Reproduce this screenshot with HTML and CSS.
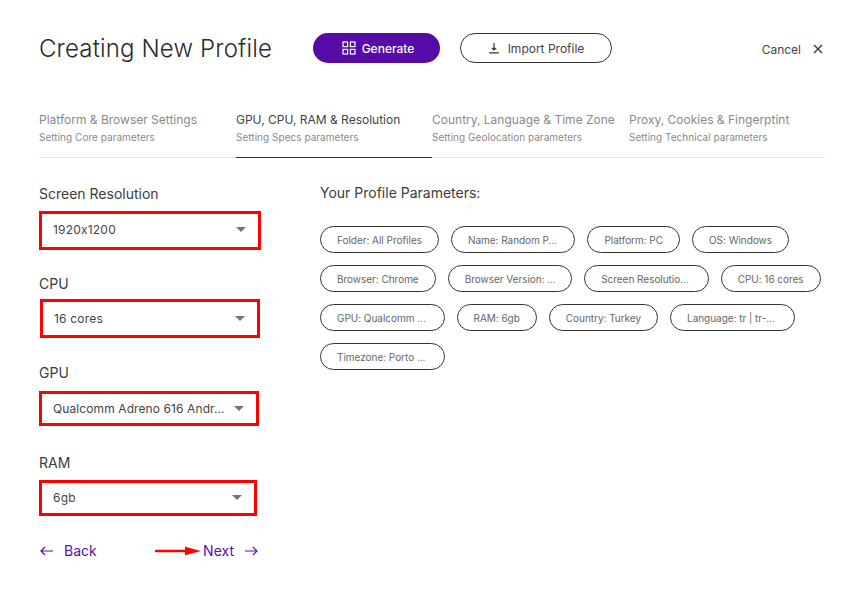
FILE: index.html
```html
<!DOCTYPE html>
<html lang="en">
<head>
  <meta charset="UTF-8" />
  <title>Creating New Profile</title>
  <link rel="stylesheet" href="styles.css">
</head>
<body>

<div class="container">
  <div class="header">
    <h1>Creating New Profile</h1>
    <button class="btn btn-generate" type="button">
      <svg width="14" height="14" viewBox="0 0 14 14" fill="none" stroke="#fff" stroke-width="1.2">
        <rect x="1" y="1" width="4.6" height="4.6"/><rect x="8.4" y="1" width="4.6" height="4.6"/>
        <rect x="1" y="8.4" width="4.6" height="4.6"/><rect x="8.4" y="8.4" width="4.6" height="4.6"/>
      </svg>
      Generate
    </button>
    <button class="btn btn-import" type="button">
      <svg width="12" height="12" viewBox="0 0 12 12" fill="none" stroke="#333" stroke-width="1.2">
        <path d="M6 1v7M3.8 5.8 6 8l2.2-2.2M1.2 10.9h9.6"/>
      </svg>
      Import Profile
    </button>
    <div class="cancel">
      Cancel
      <svg width="10" height="10" viewBox="0 0 10 10" fill="none" stroke="#333" stroke-width="1.3">
        <path d="M1 1l8 8M9 1l-8 8"/>
      </svg>
    </div>
  </div>

  <div class="tabs">
    <div class="tab tab-1"><div class="tab-title">Platform &amp; Browser Settings</div><div class="tab-sub">Setting Core parameters</div></div>
    <div class="tab tab-2 active"><div class="tab-title">GPU, CPU, RAM &amp; Resolution</div><div class="tab-sub">Setting Specs parameters</div></div>
    <div class="tab tab-3"><div class="tab-title">Country, Language &amp; Time Zone</div><div class="tab-sub">Setting Geolocation parameters</div></div>
    <div class="tab tab-4"><div class="tab-title">Proxy, Cookies &amp; Fingerptint</div><div class="tab-sub">Setting Technical parameters</div></div>
  </div>

  <div class="content">
    <div class="fields">
      <label class="field-label">Screen Resolution</label>
      <div class="select select-res"><span class="select-value">1920x1200</span><span class="caret"></span></div>

      <label class="field-label">CPU</label>
      <div class="select select-cpu"><span class="select-value">16 cores</span><span class="caret"></span></div>

      <label class="field-label">GPU</label>
      <div class="select select-gpu"><span class="select-value">Qualcomm Adreno 616 Andr...</span><span class="caret"></span></div>

      <label class="field-label">RAM</label>
      <div class="select select-ram"><span class="select-value">6gb</span><span class="caret"></span></div>

      <div class="nav">
        <div class="nav-link">
          <svg width="13" height="10" viewBox="0 0 13 10" fill="none" stroke="#5a0ca8" stroke-width="1.2"><path d="M13 5H1M5 1 1 5l4 4"/></svg>
          <span class="back-label">Back</span>
        </div>
        <div class="nav-link">
          <svg class="red-arrow" width="46" height="10" viewBox="0 0 46 10"><path d="M1 5h30" stroke="#f00" stroke-width="2.4" stroke-linecap="round"/><path d="M30 .8 46 5 30 9.2z" fill="#f00"/></svg>
          <span>Next</span>
          <svg class="next-icon" width="13" height="10" viewBox="0 0 13 10" fill="none" stroke="#5a0ca8" stroke-width="1.2"><path d="M0 5h12M8 1l4 4-4 4"/></svg>
        </div>
      </div>
    </div>

    <div class="params">
      <h3>Your Profile Parameters:</h3>
      <div class="chips">
        <span class="chip">Folder: All Profiles</span>
        <span class="chip chip-long">Name: Random P...</span>
        <span class="chip">Platform: PC</span>
        <span class="chip">OS: Windows</span>
        <span class="chip">Browser: Chrome</span>
        <span class="chip chip-long">Browser Version: ...</span>
        <span class="chip chip-long">Screen Resolutio...</span>
        <span class="chip">CPU: 16 cores</span>
        <span class="chip chip-long">GPU: Qualcomm ...</span>
        <span class="chip">RAM: 6gb</span>
        <span class="chip">Country: Turkey</span>
        <span class="chip chip-long">Language: tr | tr-...</span>
        <span class="chip chip-long">Timezone: Porto ...</span>
      </div>
    </div>
  </div>
</div>

</body>
</html>
```

FILE: styles.css
```css
* {
  box-sizing: border-box;
}

body {
  margin: 0;
  font-family: 'Inter', sans-serif;
  background: #fff;
  color: #333;
}

.container {
  width: 845px;
  height: 605px;
  padding: 33px 20px 0 39px;
  overflow: hidden;
}

.header {
  display: flex;
  align-items: center;
  height: 30px;
}

h1 {
  margin: 0 40px 0 0;
  width: 234px;
  font-size: 24px;
  font-weight: 300;
  letter-spacing: 0.15px;
  color: #2b2b2b;
  white-space: nowrap;
}

.btn {
  display: flex;
  align-items: center;
  justify-content: center;
  gap: 6px;
  height: 30px;
  border-radius: 15px;
  font-family: inherit;
  font-size: 12px;
}

.btn-generate {
  width: 127px;
  padding: 0 0 0 3px;
  background: #560ba6;
  border: none;
  color: #fff;
  font-weight: 500;
}

.btn-import {
  width: 152px;
  margin-left: 20px;
  background: #fff;
  border: 1px solid #333;
  color: #444;
  gap: 8px;
}

.cancel {
  display: flex;
  align-items: center;
  gap: 12px;
  margin-left: auto;
  margin-top: 2px;
  font-size: 12px;
  color: #444;
  padding-right: 2px;
}

.tabs {
  display: flex;
  margin-top: 49px;
  height: 46px;
  border-bottom: 1px solid #e6e6e6;
}

.tab {
  height: 46px;
  white-space: nowrap;
  color: #8a8a8a;
}

.tab-1 { width: 197px; }
.tab-2 { width: 196px; }
.tab-3 { width: 197px; }
.tab-4 { width: 196px; }

.tab.active {
  color: #444;
  border-bottom: 1px solid #4a148c;
}

.tab-title {
  font-size: 12px;
  line-height: 15px;
}

.tab.active .tab-sub {
  color: #8a8a8a;
}

.tab-sub {
  margin-top: 4px;
  font-size: 10px;
  line-height: 13px;
  letter-spacing: 0.03px;
}

.content {
  display: flex;
  margin-top: 27px;
}

.fields {
  width: 281px;
}

.field-label {
  display: block;
  font-size: 14px;
  line-height: 18px;
  color: #3c3c3c;
}

.select {
  display: flex;
  align-items: center;
  gap: 6px;
  margin-top: 8px;
  padding: 0 12px 2px 11px;
  border: 3px solid #f00;
  font-size: 12px;
  color: #444;
}

.select-res { width: 222px; height: 39px; margin-bottom: 25px; }
.select-cpu { width: 220px; height: 39px; margin: 6px 0 26px 1px; padding-bottom: 0; }
.select-gpu { width: 220px; height: 35px; margin-top: 9px; margin-bottom: 28px; padding-bottom: 0; }
.select-ram { width: 218px; height: 36px; margin-top: 8px; padding-bottom: 1px; }

.select-value {
  flex: 1;
  min-width: 0;
  white-space: nowrap;
  letter-spacing: 0.2px;
}

.select-gpu .select-value {
  letter-spacing: 0.1px;
}

.caret {
  flex: none;
  width: 0;
  height: 0;
  border-left: 5px solid transparent;
  border-right: 5px solid transparent;
  border-top: 5px solid #757575;
}

.nav {
  display: flex;
  justify-content: space-between;
  width: 219px;
  margin-top: 26px;
  padding-left: 1px;
}

.nav-link {
  display: flex;
  align-items: center;
  font-size: 14px;
  line-height: 17px;
  color: #5a0ca8;
}

.back-label {
  margin-left: 11px;
}

.red-arrow {
  margin-right: 2px;
}

.next-icon {
  margin-left: 11px;
}

.params {
  margin-top: -1px;
}

h3 {
  margin: 0;
  font-size: 14px;
  font-weight: 400;
  line-height: 18px;
  color: #3c3c3c;
}

.chips {
  display: flex;
  flex-wrap: wrap;
  gap: 12px;
  width: 505px;
  margin-top: 24px;
}

.chip {
  display: flex;
  align-items: center;
  height: 27px;
  padding: 0 16px;
  border: 1px solid #333;
  border-radius: 14px;
  font-size: 10px;
  letter-spacing: -0.03px;
  color: #666;
  white-space: nowrap;
}

.chip-long {
  width: 124.5px;
}
```
